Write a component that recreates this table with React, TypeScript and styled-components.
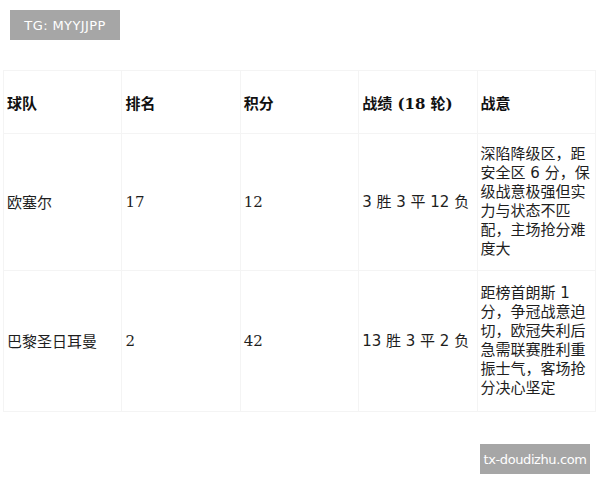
import styled, { createGlobalStyle } from "styled-components"

const GlobalStyle = createGlobalStyle`
	html, body {
		margin: 0;
		padding: 0;
		background: #ffffff;
	}
	body {
		font-family: "Noto Sans CJK SC", "Noto Sans", sans-serif;
		color: #222222;
	}
`

const Page = styled.div`
	width: 600px;
	height: 480px;
	display: flex;
	flex-direction: column;
	overflow: hidden;
`

const Badge = styled.div<{ $right?: boolean }>`
	align-self: ${(p) => (p.$right ? "flex-end" : "flex-start")};
	width: 110px;
	height: 30px;
	margin: ${(p) => (p.$right ? "32px 10px 0 0" : "10px 0 0 10px")};
	background-color: #a6a6a6;
	color: #ffffff;
	font-family: "DejaVu Sans", sans-serif;
	font-size: 13px;
	letter-spacing: ${(p) => (p.$right ? "-0.4px" : "0.4px")};
	display: flex;
	align-items: center;
	justify-content: center;
`

const StatsTable = styled.table`
	width: 593px;
	margin: 30px 0 0 3px;
	border-collapse: collapse;
	table-layout: fixed;
`

const HeadCell = styled.th`
	height: 62px;
	padding: 0 3px;
	text-align: left;
	vertical-align: middle;
	font-family: "DejaVu Serif", "Noto Sans CJK SC", serif;
	font-size: 15px;
	font-weight: bold;
	color: #111111;
	border: 1px solid #f4f4f4;
`

const Cell = styled.td<{ $sans?: boolean; $tall?: number }>`
	height: ${(p) => p.$tall ?? 136}px;
	padding: 0 3px;
	vertical-align: middle;
	font-family: ${(p) =>
		p.$sans
			? `"DejaVu Sans", "Noto Sans CJK SC", sans-serif`
			: `"DejaVu Serif", "Noto Sans CJK SC", serif`};
	font-size: 15px;
	line-height: 19px;
	color: #1e1e1e;
	border: 1px solid #f4f4f4;
`

const TeamName = styled.span`
	font-family: "Noto Sans CJK SC", sans-serif;
`

const Note = styled.div`
	font-family: "DejaVu Sans", "Noto Sans CJK SC", sans-serif;
	font-size: 15px;
	line-height: 19px;
`

const rows = [
	{
		team: "欧塞尔",
		rank: "17",
		points: "12",
		record: "3 胜 3 平 12 负",
		note: "深陷降级区，距安全区 6 分，保级战意极强但实力与状态不匹配，主场抢分难度大",
		height: 136,
	},
	{
		team: "巴黎圣日耳曼",
		rank: "2",
		points: "42",
		record: "13 胜 3 平 2 负",
		note: "距榜首朗斯 1 分，争冠战意迫切，欧冠失利后急需联赛胜利重振士气，客场抢分决心坚定",
		height: 140,
	},
]

const App = () => {
	return (
		<>
			<GlobalStyle />
			<Page>
				<Badge>TG: MYYJJPP</Badge>
				<StatsTable>
					<thead>
						<tr>
							<HeadCell>球队</HeadCell>
							<HeadCell>排名</HeadCell>
							<HeadCell>积分</HeadCell>
							<HeadCell>战绩 (18 轮)</HeadCell>
							<HeadCell>战意</HeadCell>
						</tr>
					</thead>
					<tbody>
						{rows.map((r) => (
							<tr key={r.team}>
								<Cell $tall={r.height}>
									<TeamName>{r.team}</TeamName>
								</Cell>
								<Cell $tall={r.height}>{r.rank}</Cell>
								<Cell $tall={r.height}>{r.points}</Cell>
								<Cell $tall={r.height} $sans>
									{r.record}
								</Cell>
								<Cell $tall={r.height}>
									<Note>{r.note}</Note>
								</Cell>
							</tr>
						))}
					</tbody>
				</StatsTable>
				<Badge $right>tx-doudizhu.com</Badge>
			</Page>
		</>
	)
}

export default App
